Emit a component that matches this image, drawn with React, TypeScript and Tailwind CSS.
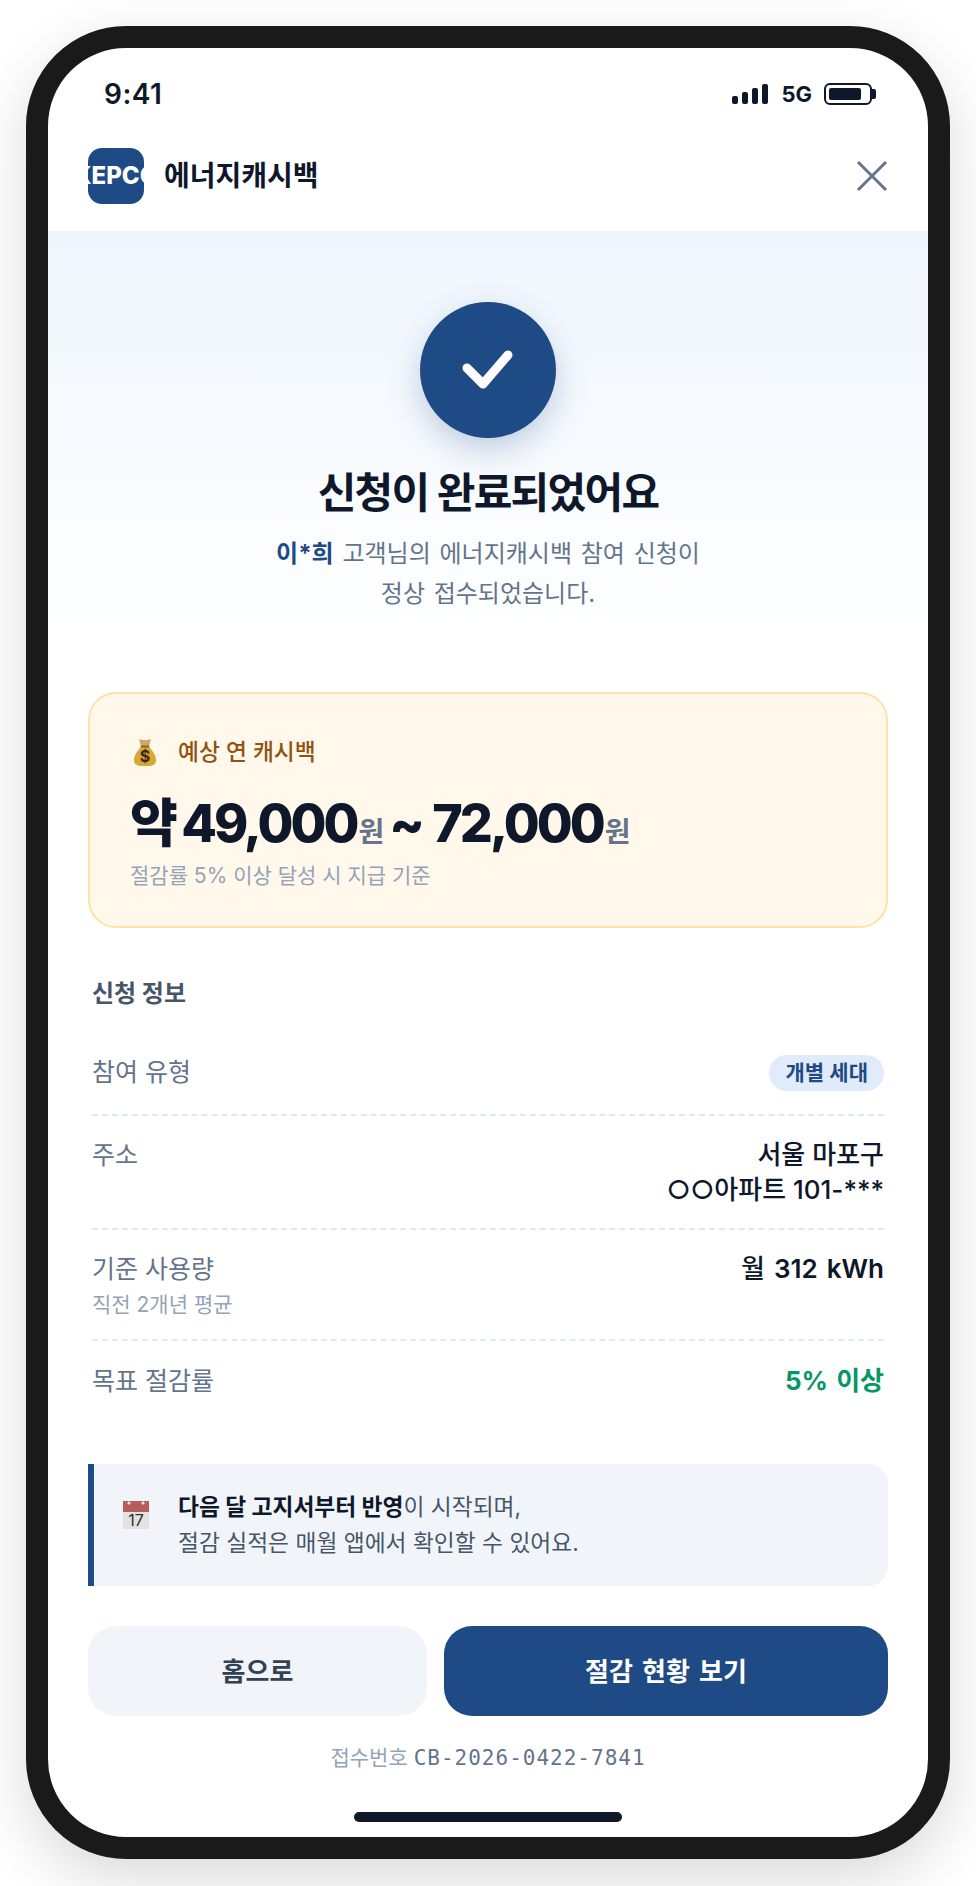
function MoneyBag() {
  return (
    <svg width="22" height="28" viewBox="0 0 22 28" className="ml-[4px] shrink-0">
      <path d="M7 9 C3 13 0 18 0 22 C0 26 3 28 7 28 H15 C19 28 22 26 22 22 C22 18 19 13 15 9 Z" fill="#d9a733" />
      <path d="M5 1 C8 2.5 14 2.5 17 1 L15 8 H7 Z" fill="#cfa868" />
      <rect x="6.5" y="7.5" width="9" height="2" rx="1" fill="#8a6420" />
      <text x="11" y="24" textAnchor="middle" fontSize="16" fontWeight="700" fill="#3a2a10" fontFamily="Inter">$</text>
    </svg>
  );
}

function CalendarIcon() {
  return (
    <svg width="26" height="28" viewBox="0 0 26 28" className="mt-[12px] shrink-0">
      <rect width="26" height="28" fill="#e2e2e2" />
      <rect width="26" height="11" fill="#b95c5c" />
      <circle cx="6" cy="2" r="1.6" fill="#f4e4e4" />
      <circle cx="20" cy="2" r="1.6" fill="#f4e4e4" />
      <text x="13" y="25" textAnchor="middle" fontSize="16" fill="#2f2f2f" fontFamily="Inter">17</text>
    </svg>
  );
}

export default function App() {
  return (
    <div className="min-h-[1886px] bg-white px-[26px] pt-[26px] pb-[27px] font-['Inter','Noto_Sans_CJK_KR',sans-serif] text-[#0f172a]">
      <div className="relative h-[1833px] w-[924px] overflow-hidden rounded-[100px] border-[22px] border-[#1a1a1a] bg-white shadow-[0_20px_60px_rgba(0,0,0,0.15)]">
        {/* status bar */}
        <div className="flex h-[88px] items-center justify-between pl-[56px] pr-[52px] pt-[4px]">
          <span className="text-[28px] font-semibold tracking-[0.5px]">9:41</span>
          <div className="flex items-center gap-[12px]">
            <div className="mr-[1px] flex items-end gap-[4px]">
              <div className="h-[8px] w-[6px] rounded-[2px] bg-[#0f172a]" />
              <div className="h-[12px] w-[6px] rounded-[2px] bg-[#0f172a]" />
              <div className="h-[16px] w-[6px] rounded-[2px] bg-[#0f172a]" />
              <div className="h-[20px] w-[6px] rounded-[2px] bg-[#0f172a]" />
            </div>
            <span className="text-[22px] font-bold">5G</span>
            <div className="flex items-center">
              <div className="flex h-[22px] w-[48px] items-center rounded-[6px] border-2 border-[#0f172a] p-[3px]">
                <div className="h-full w-[32px] rounded-[2px] bg-[#0f172a]" />
              </div>
              <div className="h-[10px] w-[4px] rounded-r-[2px] bg-[#0f172a]" />
            </div>
          </div>
        </div>

        {/* app header */}
        <div className="flex h-[96px] items-center justify-between border-b border-[#f1f5f9] px-[40px] pb-[16px]">
          <div className="flex items-center gap-[20px]">
            <div className="flex h-[56px] w-[56px] items-center justify-center overflow-hidden whitespace-nowrap rounded-[14px] bg-[#1e4a86] text-[24px] font-extrabold text-white">
              KEPCO
            </div>
            <span className="text-[28px] font-bold">에너지캐시백</span>
          </div>
          <svg width="32" height="32" viewBox="0 0 32 32" fill="none" stroke="#64748b" strokeWidth="3">
            <path d="M2 2 L30 30 M30 2 L2 30" />
          </svg>
        </div>

        {/* hero */}
        <div className="flex flex-col items-center bg-gradient-to-b from-[#eff6fd] to-white pb-[38px] pt-[70px]">
          <div className="flex h-[136px] w-[136px] items-center justify-center rounded-full bg-[#1e4a86] shadow-[0_12px_32px_rgba(30,74,134,0.25)]">
            <svg width="60" height="60" viewBox="0 0 60 60" fill="none" stroke="white" strokeWidth="9" strokeLinecap="round" strokeLinejoin="round">
              <path d="M9 28 L25 44 L50 15" />
            </svg>
          </div>
          <h1 className="mt-[27px] text-[42px] font-bold leading-[56px] tracking-[-1.7px]">신청이 완료되었어요</h1>
          <p className="mt-[13px] text-center text-[24px] leading-[40px] text-[#64748b] [word-spacing:2px]">
            <strong className="font-bold text-[#1e4a86]">이*희</strong> 고객님의 에너지캐시백 참여 신청이
            <br />
            정상 접수되었습니다.
          </p>
        </div>

        <div className="px-[40px]">
          {/* cashback */}
          <div className="mt-[40px] rounded-[28px] border-2 border-[#fde3a7] bg-[#fff8eb] px-[40px] pb-[35px] pt-[42px]">
            <div className="flex items-center gap-[22px] text-[22.75px] font-medium leading-[32px] text-[#92520f]">
              <MoneyBag />
              <span>예상 연 캐시백</span>
            </div>
            <div className="mt-[28px] flex items-baseline text-[52px] font-extrabold leading-[56px] tracking-[-3px]">
              <span className="[word-spacing:-2px]">약 49,000</span>
              <span className="ml-[2px] text-[28px] font-bold leading-none tracking-normal text-[#64748b]">원</span>
              <span className="ml-[5px] [word-spacing:2px]">~ 72,000</span>
              <span className="ml-[2px] text-[28px] font-bold leading-none tracking-normal text-[#64748b]">원</span>
            </div>
            <p className="mt-[9px] text-[21px] leading-[30px] text-[#94a3b8]">절감률 5% 이상 달성 시 지급 기준</p>
          </div>

          {/* details */}
          <div className="mt-[48px] px-[4px]">
            <h2 className="text-[24px] font-bold leading-[36px] text-[#475569]">신청 정보</h2>
            <div className="mt-[24px] flex h-[80px] items-center justify-between border-b-2 border-dashed border-[#e2e8f0] pb-[4px]">
              <span className="text-[25px] text-[#64748b]">참여 유형</span>
              <span className="rounded-full bg-[#e0ecfb] px-[16px] py-[4px] text-[21px] font-semibold leading-[28px] text-[#1e4a86]">개별 세대</span>
            </div>
            <div className="flex justify-between border-b-2 border-dashed border-[#e2e8f0] pb-[21px] pt-[21px]">
              <span className="text-[25px] leading-[36px] text-[#64748b]">주소</span>
              <span className="text-right text-[26px] font-medium leading-[35px]">
                서울 마포구
                <br />
                ○○아파트 101-***
              </span>
            </div>
            <div className="flex justify-between border-b-2 border-dashed border-[#e2e8f0] pb-[16px] pt-[21px]">
              <div className="flex flex-col">
                <span className="text-[25px] leading-[36px] text-[#64748b]">기준 사용량</span>
                <span className="text-[21px] leading-[36px] text-[#94a3b8]">직전 2개년 평균</span>
              </div>
              <span className="text-[26px] font-semibold leading-[36px] [word-spacing:2.5px]">
                <span className="font-medium">월</span> 312 kWh
              </span>
            </div>
            <div className="flex justify-between pb-[24px] pt-[22px]">
              <span className="text-[25px] leading-[36px] text-[#64748b]">목표 절감률</span>
              <span className="text-[26px] font-bold leading-[36px] text-[#059669] [word-spacing:2px]">5% 이상</span>
            </div>
          </div>

          {/* notice */}
          <div className="mt-[41px] flex items-start gap-[29px] rounded-r-[20px] border-l-[6px] border-[#1e4a86] bg-[#f1f5f9] py-[25px] pl-[29px] pr-[24px]">
            <CalendarIcon />
            <p className="text-[22.75px] leading-[36px] text-[#475569]">
              <strong className="font-bold text-[#0f172a]">다음 달 고지서부터 반영</strong>이 시작되며,
              <br />
              절감 실적은 매월 앱에서 확인할 수 있어요.
            </p>
          </div>

          {/* buttons */}
          <div className="mt-[40px] flex gap-[17px]">
            <button className="h-[90px] w-[339px] shrink-0 rounded-[28px] bg-[#f1f5f9] text-[26px] font-bold text-[#334155]">홈으로</button>
            <button className="h-[90px] flex-1 rounded-[28px] bg-[#1e4a86] text-[26px] font-bold text-white [word-spacing:3px]">절감 현황 보기</button>
          </div>

          <p className="mt-[24px] text-center text-[21px] leading-[36px] text-[#94a3b8]">
            접수번호 <span className="font-['DejaVu_Sans_Mono','Noto_Sans_CJK_KR',monospace] tracking-[1px] text-[#64748b]">CB-2026-0422-7841</span>
          </p>
        </div>

        <div className="absolute bottom-[15px] left-1/2 h-[10px] w-[268px] -translate-x-1/2 rounded-full bg-[#0f172a]" />
      </div>
    </div>
  );
}
